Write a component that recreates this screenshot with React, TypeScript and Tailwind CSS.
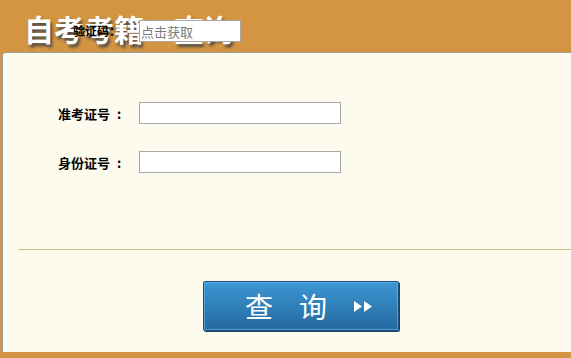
const cjk = { fontFamily: '"Noto Sans CJK SC", "Noto Sans", sans-serif' };

function FieldRow({ label }: { label: string }) {
  return (
    <div className="flex items-center">
      <label className="flex w-[81px] text-[13px] font-bold leading-none text-black" style={cjk}>
        {label}
        <span className="ml-[7px]">:</span>
      </label>
      <input
        type="text"
        className="h-[22px] w-[202px] border border-[#a9a9a9] bg-white outline-none"
      />
    </div>
  );
}

export default function App() {
  return (
    <div className="relative flex h-[358px] w-[571px] flex-col overflow-hidden bg-[#d39541]" style={cjk}>
      <div className="h-[52px] shrink-0 pl-[24px] pt-[9px]">
        <h1
          className="text-[30px] font-bold leading-[38px] text-white [text-shadow:2px_3px_3px_#4a4a4a]"
          style={cjk}
        >
          自考考籍一查询
        </h1>
      </div>

      {/* captcha field floating over the banner */}
      <div className="absolute left-[73px] top-[20px] flex items-center">
        <span className="w-[66px] text-[12px] font-bold leading-none text-black" style={cjk}>
          验证码：
        </span>
        <input
          type="text"
          placeholder="点击获取"
          className="h-[22px] w-[102px] border border-[#a9a9a9] bg-white px-px text-[13px] leading-none outline-none placeholder:text-[#7a7a7a]"
          style={cjk}
        />
      </div>

      <div className="ml-[2px] h-[300px] shrink-0 rounded-tl-[4px] border-l border-t border-[#9c9c9c] bg-[#fdfbee]">
        <div className="flex flex-col gap-[27px] pl-[55px] pt-[49px]">
          <FieldRow label="准考证号" />
          <FieldRow label="身份证号" />
        </div>

        <div className="ml-[15px] mt-[76px] h-px bg-[#c9c085]" />

        <button
          type="button"
          className="ml-[200px] mt-[31px] flex h-[50px] w-[196px] items-center rounded-[2px] border border-[#1d4f7a] bg-gradient-to-b from-[#3b97d3] to-[#2569a0] shadow-[inset_0_0_0_1px_rgba(120,190,235,0.55),1px_1px_0_#1a4366]"
        >
          <span className="ml-[41px] text-[28px] font-normal leading-none tracking-[26px] text-white" style={cjk}>
            查询
          </span>
          <svg width="19" height="11" viewBox="0 0 19 11" className="ml-[1px]">
            <polygon points="0,0 8,5.5 0,11" fill="#fff" />
            <polygon points="10,0 18,5.5 10,11" fill="#fff" />
          </svg>
        </button>
      </div>
    </div>
  );
}
